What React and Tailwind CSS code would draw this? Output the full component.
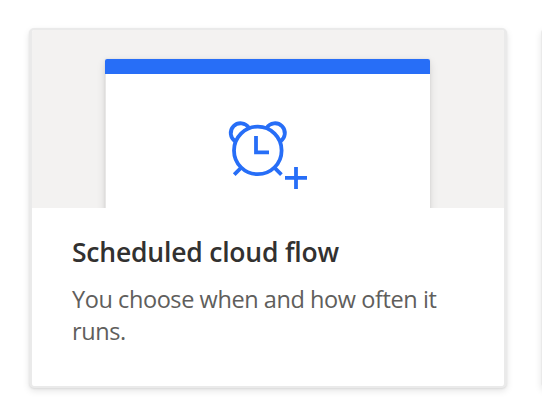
function AlarmAddIcon() {
  return (
    <svg width="80" height="70" viewBox="0 0 80 70" fill="none" stroke="#276ef7" strokeWidth="3.8" aria-hidden="true">
      <circle cx="29.8" cy="30.4" r="23.8" />
      <path d="M7.3 21.4A9.85 9.85 0 1 1 20.9 7.8" />
      <path d="M38.7 7.8A9.85 9.85 0 1 1 52.3 21.4" />
      <path d="M13.2 47.6L6.2 54.6M46.4 47.6L53.4 54.6" />
      <path d="M28 16V32.3H41" />
      <path d="M68 47V69M57 57.8H79" />
    </svg>
  );
}

function FlowCard({ title, description }) {
  return (
    <div className="w-[478px] h-[360px] shrink-0 rounded-[5px] border-x-[3px] border-y-2 border-[#eaeaea] bg-white overflow-hidden shadow-[0_3px_7px_rgba(0,0,0,0.1),0_1px_2px_rgba(0,0,0,0.08)]">
      <div className="h-[178px] bg-[#f3f2f1] flex pl-[73px] pt-[29px] overflow-hidden">
        <div className="w-[325px] h-[160px] bg-white rounded-t-[2px] overflow-hidden shadow-[0_3px_8px_rgba(0,0,0,0.13),0_0_2px_rgba(0,0,0,0.1)]">
          <div className="h-[15px] bg-[#276ef7]" />
          <div className="h-full border-l border-[#e8e7e6] pl-[122px] pt-[46px]">
            <AlarmAddIcon />
          </div>
        </div>
      </div>
      <div className="pl-10 pt-7">
        <h3 className="text-[26.5px] leading-8 tracking-[-0.2px] font-semibold text-[#323130] whitespace-nowrap">{title}</h3>
        <p className="mt-[15px] w-[380px] text-[23.5px] leading-8 tracking-[-0.42px] text-[#605e5c]">{description}</p>
      </div>
    </div>
  );
}

function App() {
  return (
    <div className="w-full h-screen overflow-hidden bg-white flex gap-[34px] pl-[29px] pt-7 font-['Open_Sans','Noto_Sans',sans-serif]">
      <FlowCard title="Scheduled cloud flow" description="You choose when and how often it runs." />
      <div className="w-[478px] h-[360px] shrink-0 rounded-[5px] border-2 border-[#eaeaea] bg-white shadow-[0_3px_7px_rgba(0,0,0,0.1)]" />
    </div>
  );
}

export default App;
